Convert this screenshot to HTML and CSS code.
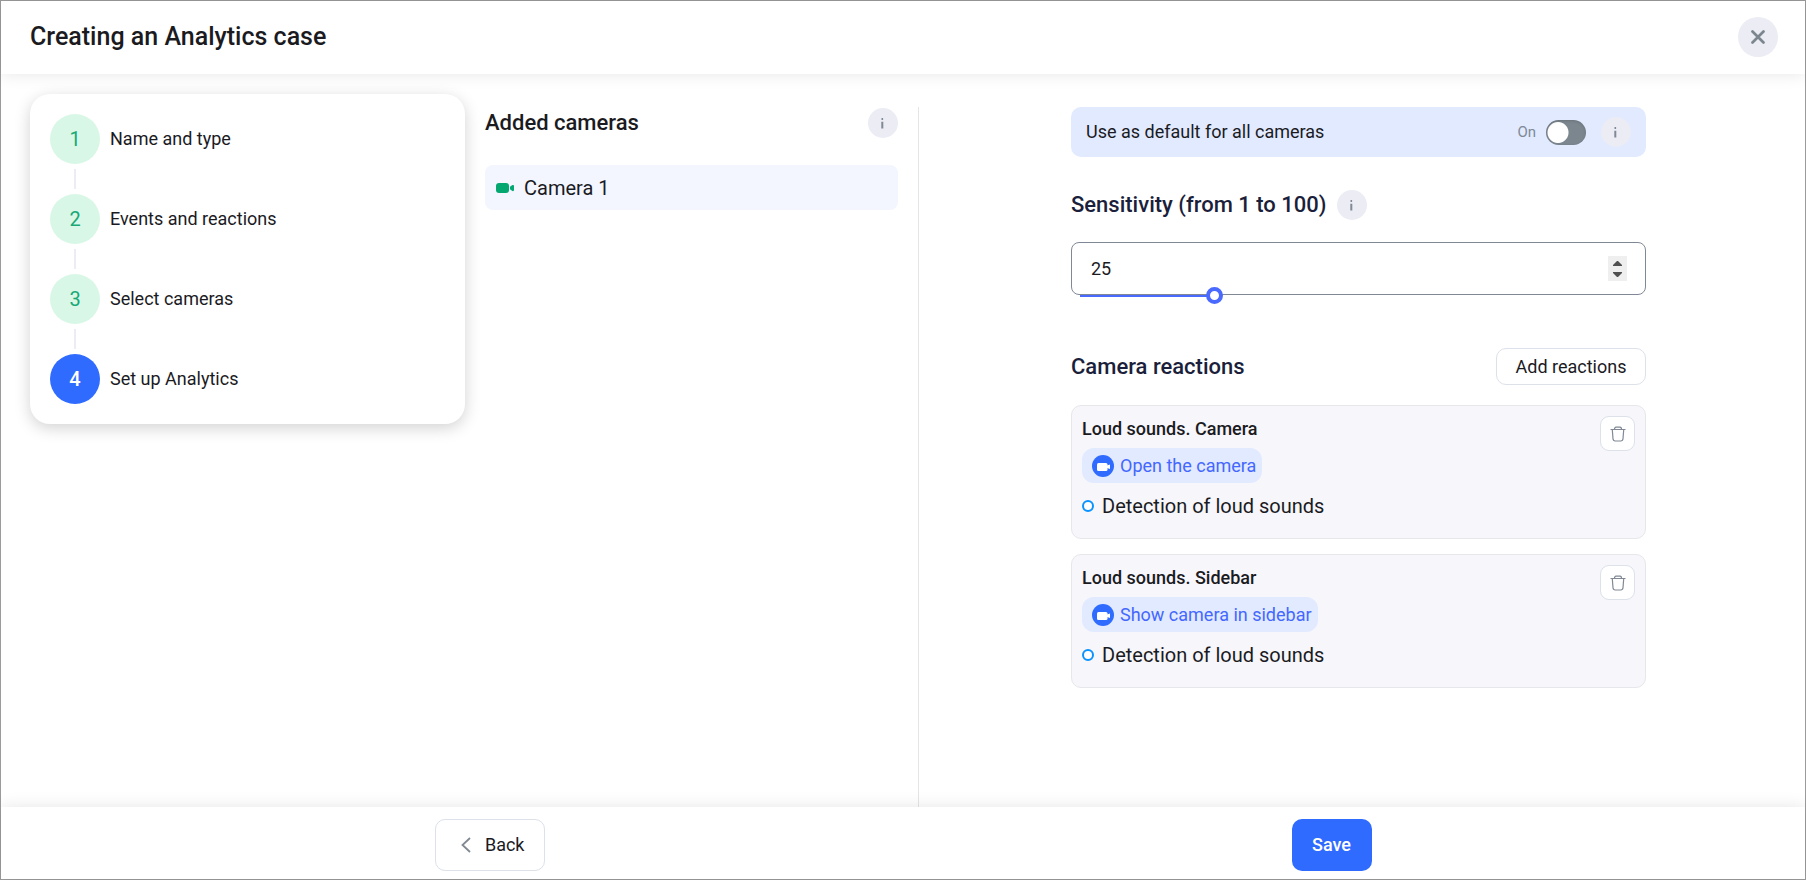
FILE: index.html
```html
<!DOCTYPE html>
<html lang="en">
<head>
<meta charset="utf-8">
<title>Creating an Analytics case</title>
<link rel="stylesheet" href="styles.css">
</head>
<body>
<svg class="sprite" aria-hidden="true">
  <symbol id="info" viewBox="0 0 30 30">
    <path d="M13.500 11h1.600M14.300 13.800v6.700" fill="none" stroke="currentColor" stroke-width="2"/>
  </symbol>
  <symbol id="trash" viewBox="0 0 16 16">
    <path d="M.5 3.500h15M4.500 3.300Q4.500 1.200 6 1.200H10Q11.500 1.200 11.500 3.300M2.300 3.700L3 12.800Q3.200 15 5.200 15H10.800Q12.800 15 13 12.800L13.700 3.700" fill="none" stroke="currentColor" stroke-width="1.200"/>
  </symbol>
  <symbol id="chip-camera" viewBox="0 0 22 22">
    <circle cx="11" cy="11" r="11" fill="#2f6bff"/>
    <rect x="5" y="8" width="10.500" height="8" rx="1.500" fill="#fff"/>
    <path d="M15 10.500l3-1v4.500l-3-1z" fill="#fff"/>
  </symbol>
</svg>
<div class="wizard">
  <header class="header">
    <h1 class="title">Creating an Analytics case</h1>
    <button class="close" type="button" aria-label="Close">
      <svg width="14" height="14" viewBox="0 0 14 14"><path d="M1.500 1.500l11 11M12.500 1.500l-11 11" stroke="currentColor" stroke-width="2.700" stroke-linecap="round"/></svg>
    </button>
  </header>

  <main class="content">
    <ol class="steps">
      <li class="step"><span class="step-number">1</span>Name and type</li>
      <li class="step"><span class="step-number">2</span>Events and reactions</li>
      <li class="step"><span class="step-number">3</span>Select cameras</li>
      <li class="step"><span class="step-number step-current">4</span>Set up Analytics</li>
    </ol>

    <section class="cameras">
      <div class="cameras-head">
        <h2 class="heading">Added cameras</h2>
        <button class="info" type="button" aria-label="About added cameras"><svg><use href="#info"/></svg></button>
      </div>
      <button class="camera" type="button">
        <svg width="18" height="12" viewBox="0 0 18 12" fill="#05a770"><rect x="0" y="1" width="13" height="10" rx="3"/><path d="M14 4.800L16.300 3Q18 2.500 18 4V8Q18 9.500 16.300 9L14 7.200z"/></svg>
        Camera 1
      </button>
    </section>

    <section class="settings">
      <div class="settings-body">
        <div class="default-row">
          <label class="default-label" for="default">Use as default for all cameras</label>
          <span class="default-state">On</span>
          <input class="toggle" id="default" type="checkbox" role="switch">
          <button class="info" type="button" aria-label="About default settings"><svg><use href="#info"/></svg></button>
        </div>

        <div class="sensitivity-head">
          <label class="heading heading-dark" for="sensitivity">Sensitivity (from 1 to 100)</label>
          <button class="info" type="button" aria-label="About sensitivity"><svg><use href="#info"/></svg></button>
        </div>
        <div class="sensitivity">
          <input class="number" id="sensitivity" type="number" min="1" max="100" value="25">
          <div class="spinner">
            <button class="spin" type="button" aria-label="Increase"><svg width="10" height="5" viewBox="0 0 10 5"><path d="M0 5V4L4 0h1l4 4v1z" fill="#505050"/></svg></button>
            <button class="spin" type="button" aria-label="Decrease"><svg width="10" height="5" viewBox="0 0 10 5"><path d="M0 0v1l4 4h1l4-4V0z" fill="#505050"/></svg></button>
          </div>
          <input class="range" type="range" min="1" max="100" value="25" aria-label="Sensitivity">
        </div>

        <div class="reactions-head">
          <h2 class="heading heading-dark">Camera reactions</h2>
          <button class="add" type="button">Add reactions</button>
        </div>
        <div class="reactions">
          <article class="reaction">
            <div class="reaction-body">
              <h3 class="reaction-title">Loud sounds. Camera</h3>
              <span class="chip"><svg width="22" height="22"><use href="#chip-camera"/></svg>Open the camera</span>
              <p class="event">Detection of loud sounds</p>
            </div>
            <button class="delete" type="button" aria-label="Delete reaction"><svg width="16" height="16"><use href="#trash"/></svg></button>
          </article>
          <article class="reaction">
            <div class="reaction-body">
              <h3 class="reaction-title">Loud sounds. Sidebar</h3>
              <span class="chip"><svg width="22" height="22"><use href="#chip-camera"/></svg>Show camera in sidebar</span>
              <p class="event">Detection of loud sounds</p>
            </div>
            <button class="delete" type="button" aria-label="Delete reaction"><svg width="16" height="16"><use href="#trash"/></svg></button>
          </article>
        </div>
      </div>
    </section>
  </main>

  <footer class="footer">
    <button class="back" type="button">
      <svg width="10" height="16" viewBox="0 0 10 16"><path d="M9 1L1.500 8L9 15" fill="none" stroke="#808994" stroke-width="1.800"/></svg>
      Back
    </button>
    <button class="save" type="button">Save</button>
  </footer>
</div>
</body>
</html>
```
FILE: styles.css
```css
*,
*::before {
  box-sizing: border-box;
}

body {
  margin: 0;
  font: 400 18px/26px Roboto, "Liberation Sans", sans-serif;
  color: #1b1b1f;
}

h1, h2, h3, p, ol {
  margin: 0;
  padding: 0;
}

button, input {
  margin: 0;
  font: inherit;
  color: inherit;
}

button {
  padding: 0;
  border: 0;
  background: none;
  cursor: pointer;
}

.sprite {
  display: none;
}

.wizard {
  display: flex;
  flex-direction: column;
  min-height: 100vh;
  border: 1px solid #9b9b9b;
  background: #fff;
}

.header {
  display: flex;
  align-items: center;
  justify-content: space-between;
  height: 73px;
  padding: 0 27px 2px 29px;
  box-shadow: 0 0 16px rgba(0, 0, 0, 0.1);
}

.title {
  font-size: 25px;
  font-weight: 500;
  line-height: 32px;
}

.close {
  display: grid;
  place-items: center;
  width: 40px;
  height: 40px;
  border-radius: 50%;
  background: #ebecf4;
  color: #7c868e;
}

.content {
  flex: 1;
  display: grid;
  grid-template-columns: 435fr 454fr 879fr;
  padding: 20px 7px 0 29px;
}

.steps {
  display: flex;
  flex-direction: column;
  align-self: start;
  gap: 30px;
  padding: 20px;
  border-radius: 20px;
  background: #fff;
  box-shadow: 0 4px 16px rgba(0, 0, 0, 0.18);
  list-style: none;
}

.step {
  position: relative;
  display: flex;
  align-items: center;
  gap: 10px;
}

.step + .step::before {
  content: "";
  position: absolute;
  top: -25px;
  left: 24px;
  width: 2px;
  height: 20px;
  background: #ebecf4;
}

.step-number {
  display: grid;
  place-items: center;
  width: 50px;
  height: 50px;
  border-radius: 50%;
  background: #d9f7e6;
  color: #18a876;
  font-size: 20px;
}

.step-current {
  background: #2f6bff;
  color: #fff;
  font-weight: 500;
}

.cameras {
  margin-top: 13px;
  padding: 0 20px;
  border-right: 1px solid #e4e5e8;
}

.cameras-head {
  display: flex;
  align-items: center;
  justify-content: space-between;
  height: 32px;
  margin-bottom: 26px;
}

.heading {
  font-size: 22px;
  font-weight: 500;
  line-height: 30px;
}

.heading-dark {
  color: #1b1f3b;
}

.info {
  width: 30px;
  height: 30px;
  border-radius: 50%;
  background: #ebecf4;
  color: #808994;
}

.info svg {
  display: block;
  width: 30px;
  height: 30px;
}

.camera {
  display: flex;
  align-items: center;
  gap: 10px;
  width: 100%;
  height: 45px;
  padding: 0 11px;
  border-radius: 8px;
  background: #f3f6ff;
  font-size: 20px;
}

.settings {
  padding-top: 13px;
}

.settings-body {
  max-width: 575px;
  margin: 0 auto;
}

.default-row {
  display: flex;
  align-items: center;
  height: 50px;
  padding: 0 15px;
  border-radius: 10px;
  background: #e1eaff;
}

.default-label {
  flex: 1;
}

.default-state {
  margin-right: 10px;
  color: #808896;
  font-size: 15px;
}

.toggle {
  appearance: none;
  width: 40px;
  height: 25px;
  margin-right: 15px;
  border-radius: 13px;
  background: radial-gradient(circle at 12px 50%, #fff 10px, #7c868e 11px);
  box-shadow: inset 0 1px 3px rgba(0, 0, 0, 0.15);
}

.sensitivity-head {
  display: flex;
  align-items: center;
  gap: 10px;
  margin: 33px 0 22px;
}

.sensitivity {
  position: relative;
  display: flex;
  align-items: center;
  height: 53px;
  padding: 0 18px 0 19px;
  border: 1px solid #808896;
  border-radius: 8px;
}

.number {
  appearance: textfield;
  flex: 1;
  min-width: 0;
  padding: 0;
  border: 0;
  outline: 0;
  background: none;
}

.number::-webkit-inner-spin-button {
  display: none;
}

.spinner {
  display: flex;
  flex-direction: column;
  justify-content: center;
  gap: 6px;
  width: 19px;
  height: 25px;
  background: #efefef;
}

.spin {
  display: grid;
  place-items: center;
  height: 5px;
}

.range {
  appearance: none;
  position: absolute;
  right: -1px;
  bottom: -10px;
  left: -1px;
  height: 17px;
  background: linear-gradient(#4a69ff, #4a69ff) 9px 8px / 24% 2px no-repeat;
}

.range::-webkit-slider-thumb {
  appearance: none;
  width: 17px;
  height: 17px;
  border: 4px solid #4a69ff;
  border-radius: 50%;
  background: #fff;
}

.reactions-head {
  display: flex;
  align-items: center;
  justify-content: space-between;
  margin: 53px 0 20px;
}

.add {
  width: 150px;
  height: 37px;
  border: 1px solid #dce1ea;
  border-radius: 10px;
}

.reactions {
  display: flex;
  flex-direction: column;
  gap: 15px;
}

.reaction {
  display: flex;
  align-items: flex-start;
  justify-content: space-between;
  min-height: 134px;
  padding: 10px;
  border: 1px solid #e6e7ea;
  border-radius: 10px;
  background: #f6f6fb;
}

.reaction-body {
  display: flex;
  flex-direction: column;
  align-items: flex-start;
}

.reaction-title {
  margin-bottom: 6px;
  font-size: 18px;
  font-weight: 500;
  line-height: 26px;
}

.chip {
  display: flex;
  align-items: center;
  gap: 6px;
  height: 35px;
  padding: 0 6px 0 10px;
  border-radius: 12px;
  background: #e1eaff;
  color: #4467ff;
}

.event {
  display: flex;
  align-items: center;
  gap: 8px;
  margin-top: 10px;
  font-size: 20px;
}

.event::before {
  content: "";
  width: 12px;
  height: 12px;
  border: 2px solid #0a93ff;
  border-radius: 50%;
  background: #fff;
}

.delete {
  display: grid;
  place-items: center;
  width: 35px;
  height: 35px;
  border: 1px solid #dce1ea;
  border-radius: 9px;
  background: #fff;
  color: #808994;
}

.footer {
  display: flex;
  align-items: center;
  justify-content: space-around;
  height: 72px;
  padding: 4px 60px 0;
  background: #fff;
  box-shadow: 0 0 16px rgba(0, 0, 0, 0.1);
}

.back {
  display: flex;
  align-items: center;
  justify-content: flex-end;
  gap: 14px;
  width: 110px;
  height: 52px;
  padding-right: 19px;
  border: 1px solid #dce1ea;
  border-radius: 10px;
}

.save {
  width: 80px;
  height: 52px;
  border-radius: 10px;
  background: #2f6bff;
  color: #fff;
  font-weight: 500;
}
```
